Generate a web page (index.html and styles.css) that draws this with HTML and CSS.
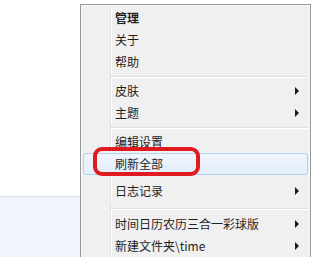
FILE: index.html
```html
<!DOCTYPE html>
<html>
<head>
<meta charset="utf-8">
<link rel="stylesheet" href="styles.css">
</head>
<body>
<div class="screen">
  <div class="pane">
    <div class="pane-top"></div>
    <div class="pane-bottom"></div>
  </div>
  <div class="menu">
    <div class="item bold">管理</div>
    <div class="item">关于</div>
    <div class="item">帮助</div>
    <div class="sep"></div>
    <div class="item sub">皮肤<span class="arrow"></span></div>
    <div class="item sub">主题<span class="arrow"></span></div>
    <div class="sep"></div>
    <div class="item">编辑设置</div>
    <div class="item hover">刷新全部</div>
    <div class="gap"></div>
    <div class="item sub">日志记录<span class="arrow"></span></div>
    <div class="sep tall"></div>
    <div class="item sub">时间日历农历三合一彩球版<span class="arrow"></span></div>
    <div class="item sub">新建文件夹\time<span class="arrow"></span></div>
  </div>
  <div class="edge"></div>
  <div class="mark"></div>
</div>
</body>
</html>
```
FILE: styles.css
```css
html, body {
  margin: 0;
  padding: 0;
  background: #ffffff;
}
.screen {
  position: relative;
  width: 320px;
  height: 257px;
  overflow: hidden;
  display: flex;
  font-family: "Noto Sans CJK SC", "Noto Sans", sans-serif;
  font-size: 12px;
  color: #1e1e1e;
}
.pane {
  width: 80px;
  flex: none;
  display: flex;
  flex-direction: column;
}
.pane-top {
  height: 196px;
  background: #ffffff;
}
.pane-bottom {
  flex: 1;
  border-top: 1px solid #d6e0eb;
  background: #f1f5fb;
}
.menu {
  width: 231px;
  flex: none;
  box-sizing: border-box;
  margin-top: 4px;
  border: 1px solid #979797;
  border-bottom: none;
  padding: 2px 2px 0 2px;
  box-shadow: inset 1px 1px 0 #f8f8f8, inset -1px 0 0 #f8f8f8;
  background: linear-gradient(to right, #f0f0f0 29px, #e2e3e3 29px, #e2e3e3 30px, #ffffff 30px, #ffffff 31px, #f0f0f0 31px);
  display: flex;
  flex-direction: column;
}
.item {
  height: 22px;
  line-height: 22px;
  padding-left: 32px;
  padding-right: 9px;
  display: flex;
  align-items: center;
  justify-content: space-between;
  white-space: nowrap;
  box-sizing: border-box;
}
.bold {
  font-weight: 700;
}
.arrow {
  width: 0;
  height: 0;
  border-left: 4px solid #1a1a1a;
  border-top: 4px solid transparent;
  border-bottom: 4px solid transparent;
}
.hover {
  border: 1px solid #b3d1f3;
  border-radius: 3px;
  background: linear-gradient(#eef4fc, #e4eefa);
  padding-left: 31px;
}
.sep {
  height: 7px;
  margin-left: 28px;
  background: linear-gradient(#f0f0f0 3px, #e0e0e0 3px, #e0e0e0 4px, #ffffff 4px, #ffffff 5px, transparent 5px);
}
.sep.tall {
  height: 11px;
  background: linear-gradient(#f0f0f0 6px, #e0e0e0 6px, #e0e0e0 7px, #ffffff 7px, #ffffff 8px, transparent 8px);
}
.gap {
  height: 5px;
}
.edge {
  flex: 1;
  background: #ffffff;
}
.mark {
  position: absolute;
  left: 93px;
  top: 147px;
  width: 107px;
  height: 29px;
  box-sizing: border-box;
  border: 4px solid #df1a20;
  border-radius: 9px;
}
```
